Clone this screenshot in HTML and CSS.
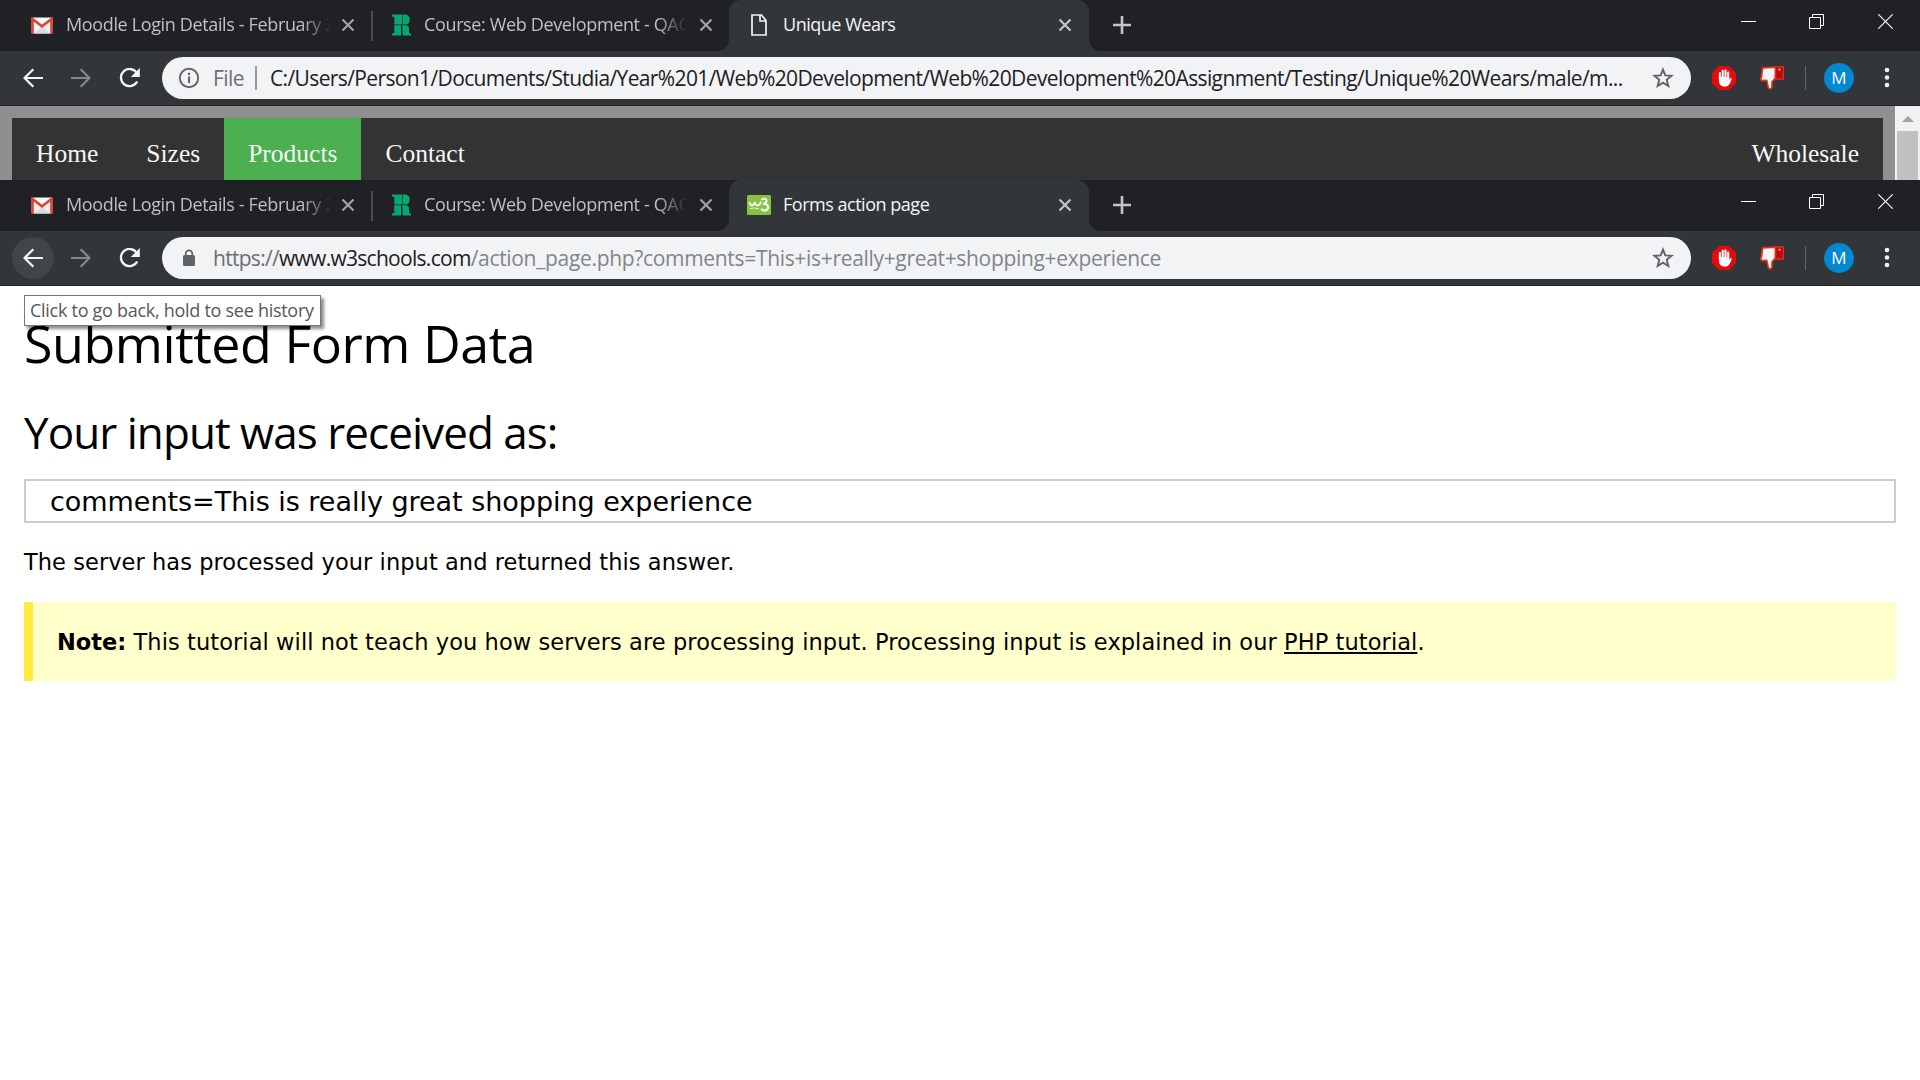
FILE: index.html
```html
<!DOCTYPE html>
<html lang="en">
<head>
<meta charset="utf-8">
<title>Forms action page</title>
<link rel="stylesheet" href="styles.css">
</head>
<body>
<svg class="sprite" aria-hidden="true">
  <symbol id="gmail" viewBox="0 0 22 17">
    <rect x="0.5" y="0.5" width="21" height="16" rx="1.5" fill="#f1f1f1"/>
    <path d="M3 16.5 11 9.5 19 16.5z" fill="#dcdcdc"/>
    <path d="M3 1h16l-8 7z" fill="#fafafa"/>
    <path d="M1.500 16.500V2L11 9.300 20.500 2v14.500" fill="none" stroke="#dc4438" stroke-width="2.600"/>
  </symbol>
  <symbol id="moodle" viewBox="0 0 19 22">
    <path d="M0 .5h10v10H2.300V3.500L0 2.200zM10.600.500h2.900a4.600 4.600 0 0 1 4.200 5c0 2.600-1 4.200-3.200 5h-3.900zM2.300 11.300H9v10.200H0v-1.700l2.300-1.300zM9.800 11.300h3.800c2.500 0 3.400 1.300 3.400 3.600v3.900l2 1.300v1.400h-6.400c-1.700 0-2.200-.8-2.200-2.300v-6z" fill="#05a870"/>
  </symbol>
  <symbol id="doc" viewBox="0 0 16 22">
    <path d="M1 1h9.500L15 6.500V21H1zM9 1v6h6" fill="none" stroke="#f4f4f4" stroke-width="1.700"/>
  </symbol>
  <symbol id="w3" viewBox="0 0 24 20">
    <rect width="24" height="20" rx="1.500" fill="#86c440"/>
    <path d="M2.500 7c.2 4 4 5 5.300 0 .7 5 5 4.500 6.200-.5" fill="none" stroke="#fff" stroke-width="1.800"/>
    <path d="M3 13.500q4-1.300 9 .5" fill="none" stroke="#eef8e0" stroke-width="1"/>
    <path d="M14.500 4.800c2-2 5.700-1 5 1.700-.4 1.500-1.700 2.200-3.200 2.500 3.700-.3 5.300 1.600 4.700 4-.7 3-5 3.500-6.800.8" fill="none" stroke="#fff" stroke-width="2"/>
  </symbol>
  <symbol id="close" viewBox="0 0 14 14"><path d="M1.500 1.500l11 11M12.500 1.500l-11 11" fill="none" stroke="currentColor" stroke-width="2.200"/></symbol>
  <symbol id="plus" viewBox="0 0 18 18"><path d="M9 0v18M0 9h18" fill="none" stroke="currentColor" stroke-width="2.600"/></symbol>
  <symbol id="min" viewBox="0 0 15 15"><path d="M0 7.500h15" stroke="#fff"/></symbol>
  <symbol id="restore" viewBox="0 0 15 15"><path d="M.5 3.500h11v11H.5zM3.500 3.500v-3h11v11h-3" fill="none" stroke="#fff"/></symbol>
  <symbol id="quit" viewBox="0 0 15 15"><path d="M.3.300l14.400 14.400M14.700.300.300 14.700" stroke="#fff" stroke-width="1.100"/></symbol>
  <symbol id="back" viewBox="0 0 20 20"><path d="M20 10H1.500M10.300 1.200 1.500 10l8.800 8.800" fill="none" stroke="currentColor" stroke-width="2.200"/></symbol>
  <symbol id="forward" viewBox="0 0 20 20"><path d="M0 10h18.500M9.700 1.200 18.500 10l-8.800 8.800" fill="none" stroke="currentColor" stroke-width="2.200"/></symbol>
  <symbol id="reload" viewBox="0 0 21 20"><path d="M17.600 4.600A8.600 8.600 0 1 0 18.200 13.500" fill="none" stroke="#f4f5f5" stroke-width="2.300"/><path d="M20.800 0v9h-9z" fill="#f4f5f5"/></symbol>
  <symbol id="info" viewBox="0 0 22 22"><circle cx="11" cy="11" r="9.200" fill="none" stroke="#5f6368" stroke-width="1.900"/><path d="M11 9.500v6.500M11 5.800v2.300" stroke="#5f6368" stroke-width="2.100"/></symbol>
  <symbol id="lock" viewBox="0 0 14 18"><rect x="1" y="6" width="12" height="11" rx="1.500" fill="#5f6368"/><path d="M3.700 6.500V4.600a3.300 3.300 0 0 1 6.600 0v1.900" fill="none" stroke="#5f6368" stroke-width="1.700"/></symbol>
  <symbol id="star" viewBox="0 0 22 22"><path d="M11 2.600l2.300 5.800 6.300.4-4.900 4 1.600 6.200-5.300-3.400L5.700 19l1.600-6.200-4.900-4 6.300-.4z" fill="none" stroke="#5f6368" stroke-width="1.900"/></symbol>
  <symbol id="hand" viewBox="0 0 24 24">
    <path d="M7 0h10l7 7v10l-7 7H7l-7-7V7z" fill="#e50b0b"/>
    <path d="M7.900 13V7M10.700 12V4.700M13.500 12V4.200M16.200 13V6.500" stroke="#fff" stroke-width="2.100" stroke-linecap="round"/>
    <path d="M6.900 11h10.300v3.200l1-1.700c.7-.8 1.700-.3 1.300.8-1.200 4-2.600 7.300-6.500 7.300-4.600 0-6.100-3-6.100-6.600z" fill="#fff"/>
  </symbol>
  <symbol id="thumb" viewBox="0 0 24 24">
    <path d="M14.500.800h8.900v12.400h-8.900z" fill="#bd0a0a" stroke="#e0341a" stroke-width="1.200"/>
    <path d="M2.600 1.800 15.500 1.200l-.2 11.100-3.300 3.600v5.500c-1 2.300-4.100 1.500-4-1l-1.300-6-4.900.2c-1.300-.5-1.200-2.300-.5-3l.5-3.400z" fill="#f5f5f6" stroke="#dd3218" stroke-width="1.700" stroke-linejoin="round"/>
    <circle cx="19.500" cy="3.700" r=".9" fill="#fff"/>
  </symbol>
  <symbol id="dots" viewBox="0 0 6 22"><circle cx="3" cy="3" r="2.300" fill="#f1f3f4"/><circle cx="3" cy="10.500" r="2.300" fill="#f1f3f4"/><circle cx="3" cy="18" r="2.300" fill="#f1f3f4"/></symbol>
</svg>

<section class="window first">
  <header class="tabs">
    <div class="tab tab-a"><svg class="ico gmail"><use href="#gmail"/></svg><span class="title">Moodle Login Details - February 2</span><svg class="x"><use href="#close"/></svg></div>
    <div class="tab tab-b"><svg class="ico moodle"><use href="#moodle"/></svg><span class="title">Course: Web Development - QAC</span><svg class="x"><use href="#close"/></svg></div>
    <div class="tab active"><svg class="ico doc"><use href="#doc"/></svg><span class="title">Unique Wears</span><svg class="x"><use href="#close"/></svg></div>
    <svg class="plus"><use href="#plus"/></svg>
    <div class="controls"><svg><use href="#min"/></svg><svg><use href="#restore"/></svg><svg><use href="#quit"/></svg></div>
  </header>
  <div class="toolbar">
    <span class="nav-btn"><svg><use href="#back"/></svg></span>
    <span class="nav-btn dim"><svg><use href="#forward"/></svg></span>
    <span class="nav-btn"><svg class="reload"><use href="#reload"/></svg></span>
    <div class="omnibox">
      <svg class="info"><use href="#info"/></svg>
      <span class="scheme">File</span>
      <span class="url path">C:/Users/Person1/Documents/Studia/Year%201/Web%20Development/Web%20Development%20Assignment/Testing/Unique%20Wears/male/m...</span>
      <svg class="star"><use href="#star"/></svg>
    </div>
    <svg class="ext"><use href="#hand"/></svg>
    <svg class="ext thumb"><use href="#thumb"/></svg>
    <span class="divider"></span>
    <span class="avatar">M</span>
    <svg class="dots"><use href="#dots"/></svg>
  </div>
  <main class="shop">
    <nav class="menu">
      <a>Home</a><a>Sizes</a><a class="current">Products</a><a>Contact</a><a class="right">Wholesale</a>
    </nav>
    <div class="scrollbar"><span class="up"></span><span class="handle"></span></div>
  </main>
</section>

<section class="window second">
  <header class="tabs">
    <div class="tab tab-a"><svg class="ico gmail"><use href="#gmail"/></svg><span class="title">Moodle Login Details - February 2</span><svg class="x"><use href="#close"/></svg></div>
    <div class="tab tab-b"><svg class="ico moodle"><use href="#moodle"/></svg><span class="title">Course: Web Development - QAC</span><svg class="x"><use href="#close"/></svg></div>
    <div class="tab active"><svg class="ico w3"><use href="#w3"/></svg><span class="title">Forms action page</span><svg class="x"><use href="#close"/></svg></div>
    <svg class="plus"><use href="#plus"/></svg>
    <div class="controls"><svg><use href="#min"/></svg><svg><use href="#restore"/></svg><svg><use href="#quit"/></svg></div>
  </header>
  <div class="toolbar">
    <span class="nav-btn hover"><svg><use href="#back"/></svg><span class="tooltip">Click to go back, hold to see history</span></span>
    <span class="nav-btn dim"><svg><use href="#forward"/></svg></span>
    <span class="nav-btn"><svg class="reload"><use href="#reload"/></svg></span>
    <div class="omnibox">
      <svg class="lock"><use href="#lock"/></svg>
      <span class="url web"><span class="proto">https://</span>www.w3schools.com<span class="rest">/action_page.php?comments=This+is+really+great+shopping+experience</span></span>
      <svg class="star"><use href="#star"/></svg>
    </div>
    <svg class="ext"><use href="#hand"/></svg>
    <svg class="ext thumb"><use href="#thumb"/></svg>
    <span class="divider"></span>
    <span class="avatar">M</span>
    <svg class="dots"><use href="#dots"/></svg>
  </div>
  <main class="result">
    <h1>Submitted Form Data</h1>
    <h2>Your input was received as:</h2>
    <div class="data">comments=This is really great shopping experience</div>
    <p class="answer">The server has processed your input and returned this answer.</p>
    <div class="note"><p><strong>Note:</strong> This tutorial will not teach you how servers are processing input. Processing input is explained in our <a>PHP tutorial</a>.</p></div>
  </main>
</section>
</body>
</html>
```
FILE: styles.css
```css
* { box-sizing: border-box; }
body { margin: 0; background: #fff; font-family: "Open Sans", sans-serif; overflow: hidden; }
.sprite { display: none; }
svg { flex: none; display: block; }

.window { display: flex; flex-direction: column; }
.first { height: 180px; overflow: hidden; }
.second { height: 900px; }

/* tab strip */
.tabs { display: flex; align-items: center; height: 51px; background: #202124; color: #9fa3a6; }
.tab { display: flex; align-items: center; height: 51px; position: relative; }
.tab-a { width: 371px; padding-left: 31px; }
.tab-b { width: 358px; padding-left: 21px; }
.tab-b::before { content: ""; position: absolute; left: 0; top: 11px; width: 2px; height: 30px; background: #4a4c50; }
.active { width: 360px; padding-left: 18px; background: #323639; border-radius: 12px 12px 0 0; color: #f4f5f5; z-index: 1; }
.active::before, .active::after { content: ""; position: absolute; bottom: 0; width: 12px; height: 12px; }
.active::before { left: -12px; background: radial-gradient(circle at 0 0, transparent 11.5px, #323639 12.5px); }
.active::after { right: -12px; background: radial-gradient(circle at 100% 0, transparent 11.5px, #323639 12.5px); }
.title { overflow: hidden; white-space: nowrap; font-size: 18px; line-height: 26px; letter-spacing: -0.36px; margin-top: -3px; color: #bdc1c6; }
.tab-a .title { width: 271px; margin-left: 13px; }
.tab-b .title { width: 268px; margin-left: 13px; }
.tab-a .title, .tab-b .title { -webkit-mask-image: linear-gradient(to right, #000 87%, transparent 98%); mask-image: linear-gradient(to right, #000 87%, transparent 98%); }
.active .title { width: 263px; margin-left: 12px; color: #f4f5f5; letter-spacing: -0.48px; }
.gmail { width: 22px; height: 17px; }
.moodle { width: 19px; height: 22px; margin-top: -1px; }
.doc { width: 16px; height: 22px; margin: -1px 4px 0; }
.w3 { width: 24px; height: 20px; margin-top: -1px; }
.x { width: 14px; height: 14px; margin-top: -1px; }
.tab-a .x { margin-left: 4px; }
.tab-b .x { margin-left: 7px; }
.active .x { margin-left: 12px; color: #c3c6c9; }
.plus { width: 18px; height: 18px; margin: -1px 0 0 24px; color: #c3c6c9; }
.controls { display: flex; gap: 53px; margin: -9px 27px 0 auto; }
.controls svg { width: 15px; height: 15px; }
.controls svg:last-child { margin-left: 1px; }

/* toolbar */
.toolbar { display: flex; align-items: center; height: 55px; background: #323639; border-bottom: 1px solid #202124; padding-left: 12px; color: #f4f5f5; }
.nav-btn { display: flex; align-items: center; justify-content: center; width: 42px; height: 42px; margin-right: 6px; border-radius: 50%; position: relative; }
.nav-btn svg { width: 20px; height: 20px; margin-top: -1px; }
.nav-btn .reload { width: 21px; margin-left: 0; }
.dim { color: #85888b; }
.hover { background: #424548; }
.omnibox { display: flex; align-items: center; width: 1529px; height: 42px; margin-left: 6px; border-radius: 21px; background: #f1f3f4; font-size: 21px; line-height: 30px; white-space: nowrap; color: #202124; }
.info { width: 22px; height: 22px; margin-left: 16px; }
.lock { width: 14px; height: 18px; margin: -1px 17px 0 20px; }
.scheme { width: 44px; margin-left: 13px; letter-spacing: -0.6px; height: 24px; line-height: 24px; border-right: 2px solid #96999c; color: #6b6f73; }
.path { margin-left: 13px; letter-spacing: -0.62px; }
.web { letter-spacing: -0.71px; }
.proto { color: #6b6f73; }
.rest { color: #80868b; letter-spacing: -0.32px; }
.star { width: 22px; height: 22px; margin: -1px 17px 0 auto; }
.ext { width: 24px; height: 24px; margin-left: 21px; }
.thumb { margin-left: 24px; }
.divider { width: 1px; height: 24px; margin-left: 21px; background: #5f6368; }
.avatar { width: 30px; height: 30px; margin-left: 18px; border-radius: 50%; background: #0288d1; color: #fff; font-size: 17px; line-height: 30px; text-align: center; }
.dots { width: 6px; height: 22px; margin-left: 30px; }
.tooltip { position: absolute; left: 12px; top: 58px; z-index: 5; height: 31px; padding: 0 6px 0 5px; border: 1px solid #767676; background: #fff; box-shadow: 3px 3px 3px rgba(0,0,0,.45); color: #575757; font-size: 18px; line-height: 29px; letter-spacing: -0.28px; white-space: nowrap; }

/* shop page strip */
.shop { display: flex; height: 74px; background: #8f8f8f; padding-left: 12px; }
.menu { display: flex; width: 1871px; height: 62px; margin-top: 12px; background: #333; font-family: "Liberation Serif", serif; font-size: 25.5px; line-height: 71px; color: #f6f6f6; }
.menu a { padding: 0 24px; height: 62px; }
.menu .current { background: #4caf50; }
.menu .right { margin-left: auto; }
.scrollbar { width: 25px; margin-left: 12px; background: #f1f1f1; display: flex; flex-direction: column; align-items: center; }
.up { margin-top: 10px; border: 6px solid transparent; border-top: 0; border-bottom-color: #a3a3a3; }
.handle { width: 21px; flex: 1; margin-top: 9px; background: #c1c1c1; }

/* result page */
.result { padding: 27px 24px 0; color: #000; font-family: "DejaVu Sans", sans-serif; font-size: 22.5px; }
h1, h2 { margin: 0; font-family: "Open Sans", sans-serif; font-weight: 400; }
h1 { font-size: 52px; line-height: 60px; letter-spacing: -0.47px; }
h2 { margin-top: 34px; font-size: 44px; line-height: 50px; letter-spacing: -0.95px; }
.data { height: 44px; margin-top: 22px; border: 2px solid #ccc; padding-left: 24px; font-size: 27px; line-height: 41px; letter-spacing: -0.03px; }
.answer { margin: 22px 0 0; line-height: 34px; letter-spacing: 0.06px; }
.note { height: 79px; margin-top: 23px; border-left: 9px solid #ffeb3b; background: #ffffcc; padding-left: 24px; }
.note p { margin: 0; line-height: 80px; letter-spacing: 0.075px; }
.note strong { letter-spacing: 0; }
.note a { text-decoration: underline; text-decoration-thickness: 2px; text-underline-offset: 2px; }
```
